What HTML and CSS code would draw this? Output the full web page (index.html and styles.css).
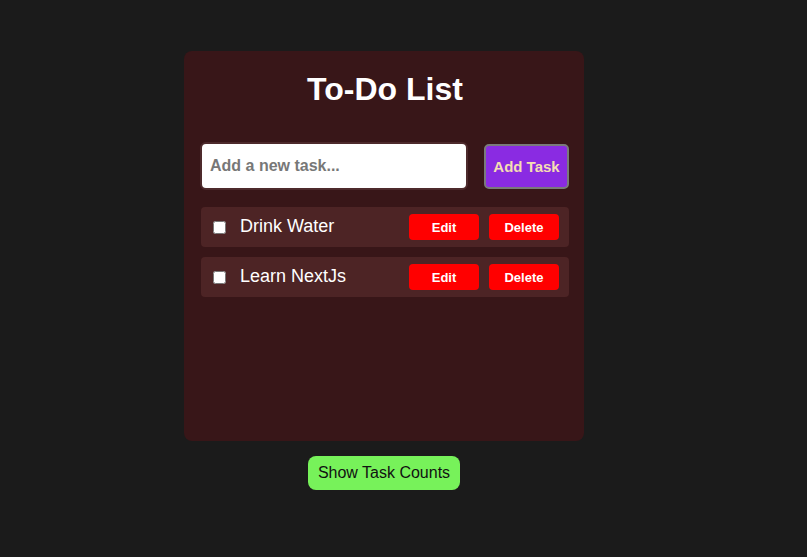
FILE: index.html
```html
<!DOCTYPE html>
<html>
<head>
<meta charset="utf-8">
<link rel="stylesheet" href="styles.css">
</head>
<body>
<div class="page">
  <div class="card">
    <h1 class="title">To-Do List</h1>
    <div class="add-row">
      <input class="task-input" type="text" placeholder="Add a new task...">
      <button class="add-btn">Add Task</button>
    </div>
    <ul class="list">
      <li class="item">
        <input class="check" type="checkbox">
        <span class="label">Drink Water</span>
        <button class="small-btn">Edit</button>
        <button class="small-btn">Delete</button>
      </li>
      <li class="item">
        <input class="check" type="checkbox">
        <span class="label">Learn NextJs</span>
        <button class="small-btn">Edit</button>
        <button class="small-btn">Delete</button>
      </li>
    </ul>
  </div>
  <button class="count-btn">Show Task Counts</button>
</div>
</body>
</html>
```

FILE: styles.css
```css
html, body {
  margin: 0;
  padding: 0;
  background: #1b1b1b;
  font-family: "Liberation Sans", Arial, sans-serif;
}

.page {
  width: 400px;
  margin-left: 184px;
  padding-top: 51px;
  display: flex;
  flex-direction: column;
  align-items: center;
}

.card {
  box-sizing: border-box;
  width: 400px;
  height: 390px;
  background: #381618;
  border-radius: 8px;
  padding: 20px 15px 16px 16px;
}

.title {
  margin: 0 0 34px 1px;
  text-align: center;
  color: #ffffff;
  font-size: 32px;
  font-weight: bold;
  line-height: 37px;
}

.add-row {
  display: flex;
  align-items: center;
  gap: 16px;
}

.task-input {
  box-sizing: border-box;
  flex: none;
  width: 268px;
  height: 48px;
  border: 2px solid #4d2a2c;
  border-radius: 6px;
  background: #ffffff;
  padding: 0 8px;
  font-family: "Liberation Sans", Arial, sans-serif;
  font-size: 16px;
  font-weight: bold;
  color: #333;
  outline: none;
}

.task-input::placeholder {
  color: #777777;
  font-weight: bold;
}

.add-btn {
  box-sizing: border-box;
  flex: none;
  width: 85px;
  height: 45px;
  background: #8a2be2;
  border: 2px solid #7a7a7a;
  border-radius: 5px;
  color: #f5deb3;
  font-family: "Liberation Sans", Arial, sans-serif;
  font-size: 15px;
  font-weight: bold;
  padding: 0;
}

.list {
  list-style: none;
  margin: 17px 0 0 1px;
  padding: 0;
  display: flex;
  flex-direction: column;
  gap: 10px;
}

.item {
  box-sizing: border-box;
  height: 40px;
  background: #4d2425;
  border-radius: 4px;
  display: flex;
  align-items: center;
  padding: 0 10px 0 12px;
  gap: 10px;
}

.check {
  margin: 0 4px 0 0;
  width: 13px;
  height: 13px;
}

.label {
  flex: 1;
  color: #ffffff;
  font-size: 18px;
  margin-top: -2px;
}

.small-btn {
  box-sizing: border-box;
  width: 70px;
  height: 26px;
  border: none;
  border-radius: 4px;
  background: #ff0000;
  color: #ffffff;
  font-family: "Liberation Sans", Arial, sans-serif;
  font-size: 13px;
  font-weight: bold;
  padding: 0;
}

.count-btn {
  margin-top: 15px;
  box-sizing: border-box;
  width: 152px;
  height: 34px;
  border: none;
  border-radius: 8px;
  background: #77f25a;
  color: #111111;
  font-family: "Liberation Sans", Arial, sans-serif;
  font-size: 16px;
  padding: 0;
}
```
